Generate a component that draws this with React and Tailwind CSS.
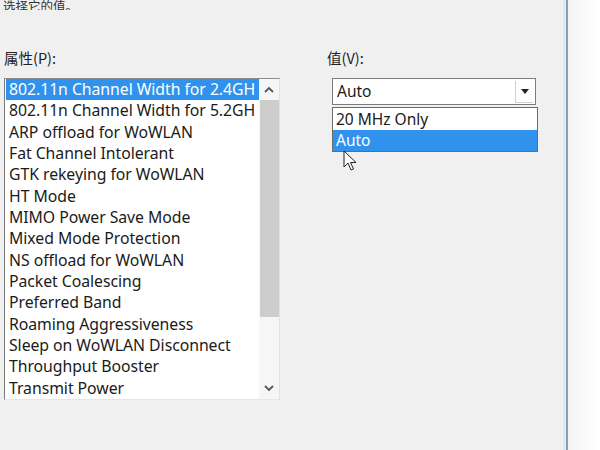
import React from 'react';

const PROPS = [
  '802.11n Channel Width for 2.4GH',
  '802.11n Channel Width for 5.2GH',
  'ARP offload for WoWLAN',
  'Fat Channel Intolerant',
  'GTK rekeying for WoWLAN',
  'HT Mode',
  'MIMO Power Save Mode',
  'Mixed Mode Protection',
  'NS offload for WoWLAN',
  'Packet Coalescing',
  'Preferred Band',
  'Roaming Aggressiveness',
  'Sleep on WoWLAN Disconnect',
  'Throughput Booster',
  'Transmit Power',
];

const FONT = { fontFamily: '"Noto Sans", "Noto Sans CJK SC", sans-serif' };
const CJK = { fontFamily: '"Noto Sans CJK SC", sans-serif' };

const Chevron = ({ up }) => (
  <svg width="10" height="7" viewBox="0 0 10 7" className="block">
    <path
      d={up ? 'M1 6 L5 2 L9 6' : 'M1 1 L5 5 L9 1'}
      fill="none"
      stroke="#555"
      strokeWidth="1.8"
    />
  </svg>
);

const Cursor = () => (
  <svg width="14" height="22" viewBox="0 0 14 22">
    <path d="M1 1 L1 17 L5 13 L8 20 L10.5 19 L7.5 12.5 L13 12.5 Z" fill="#fff" stroke="#222" strokeWidth="1" strokeLinejoin="round" />
  </svg>
);

export default function App() {
  return (
    <div className="w-[600px] h-[450px] overflow-hidden flex bg-[#f0f0f0] text-[#1a1a1a]" style={FONT}>
      <div className="w-[563px] flex flex-col">
        {/* header text, cut off at top */}
        <div className="h-[10px] overflow-hidden flex items-end pl-[3px]">
          <span className="text-[12.5px] leading-[14px] text-[#333] -mb-[3px]" style={CJK}>
            选择它的值。
          </span>
        </div>

        <div className="flex mt-[39px]">
          {/* left: property list */}
          <div className="w-[327px] pl-[4px]">
            <div className="text-[14.5px] leading-[17px] h-[17px] text-[#222]" style={CJK}>属性(P):</div>
            <div className="mt-[12px] w-[276px] h-[322px] bg-white border-t border-l border-t-[#8a8a8a] border-l-[#7a7a7a] border-r border-b border-r-[#e2e2e2] border-b-[#e6e6e6] flex">
              <div className="flex-1 pl-[1px] overflow-hidden">
                {PROPS.map((p, i) => (
                  <div
                    key={p}
                    className={
                      'h-[21.35px] leading-[21.35px] text-[15.8px] whitespace-nowrap pl-[3px] tracking-[-0.05px] ' +
                      (i === 0 ? 'bg-[#3092ec] text-white' : '')
                    }
                  >
                    {p}
                  </div>
                ))}
              </div>
              <div className="w-[20px] flex flex-col items-center bg-[#f6f6f6]">
                <div className="h-[21px] flex items-center justify-center"><Chevron up /></div>
                <div className="w-[19px] h-[217px] bg-[#cdcdcd]" />
                <div className="flex-1" />
                <div className="h-[21px] flex items-center justify-center"><Chevron /></div>
              </div>
            </div>
          </div>

          {/* right: value */}
          <div className="flex-1 relative">
            <div className="text-[14.5px] leading-[17px] h-[17px] text-[#222]" style={CJK}>值(V):</div>
            <div className="mt-[12px] ml-[5px] w-[204px] h-[27px] bg-white border border-[#7d7d7d] flex items-center">
              <span className="flex-1 pl-[4px] text-[15.5px]">Auto</span>
              <div className="w-[18px] h-[22px] mr-[2px] border-b border-l border-[#d0d0d0] flex items-center justify-center">
                <svg width="8" height="5" viewBox="0 0 8 5"><path d="M0 0 L8 0 L4 5 Z" fill="#222" /></svg>
              </div>
            </div>
            <div className="mt-[2px] ml-[5px] w-[206px] bg-white border border-[#6b6b6b]">
              <div className="h-[22px] leading-[22px] pl-[3px] text-[15.5px]">20 MHz Only</div>
              <div className="h-[21px] leading-[21px] pl-[3px] text-[15.5px] bg-[#3092ec] text-white">Auto</div>
            </div>
            <div className="absolute left-[16px] top-[101px]">
              <Cursor />
            </div>
          </div>
        </div>
      </div>
      {/* window frame edge */}
      <div className="w-[3px] bg-[#d8eaf6]" />
      <div className="w-[2px] bg-[#8a9fb2]" />
      <div className="flex-1 bg-gradient-to-r from-[#f4f4f4] to-white" />
    </div>
  );
}
